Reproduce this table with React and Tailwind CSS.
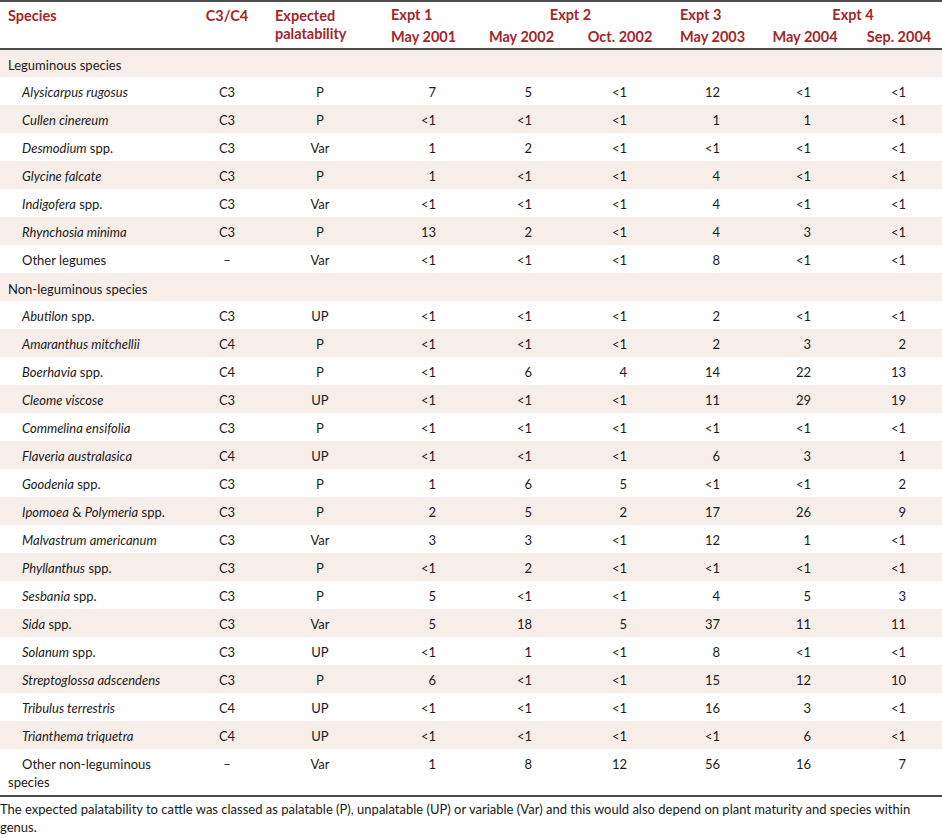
import React from "react";

const rows = [
  { section: "Leguminous species" },
  ["*Alysicarpus rugosus*", "C3", "P", "7", "5", "<1", "12", "<1", "<1"],
  ["*Cullen cinereum*", "C3", "P", "<1", "<1", "<1", "1", "1", "<1"],
  ["*Desmodium* spp.", "C3", "Var", "1", "2", "<1", "<1", "<1", "<1"],
  ["*Glycine falcate*", "C3", "P", "1", "<1", "<1", "4", "<1", "<1"],
  ["*Indigofera* spp.", "C3", "Var", "<1", "<1", "<1", "4", "<1", "<1"],
  ["*Rhynchosia minima*", "C3", "P", "13", "2", "<1", "4", "3", "<1"],
  ["Other legumes", "–", "Var", "<1", "<1", "<1", "8", "<1", "<1"],
  { section: "Non-leguminous species" },
  ["*Abutilon* spp.", "C3", "UP", "<1", "<1", "<1", "2", "<1", "<1"],
  ["*Amaranthus mitchellii*", "C4", "P", "<1", "<1", "<1", "2", "3", "2"],
  ["*Boerhavia* spp.", "C4", "P", "<1", "6", "4", "14", "22", "13"],
  ["*Cleome viscose*", "C3", "UP", "<1", "<1", "<1", "11", "29", "19"],
  ["*Commelina ensifolia*", "C3", "P", "<1", "<1", "<1", "<1", "<1", "<1"],
  ["*Flaveria australasica*", "C4", "UP", "<1", "<1", "<1", "6", "3", "1"],
  ["*Goodenia* spp.", "C3", "P", "1", "6", "5", "<1", "<1", "2"],
  ["*Ipomoea* & *Polymeria* spp.", "C3", "P", "2", "5", "2", "17", "26", "9"],
  ["*Malvastrum americanum*", "C3", "Var", "3", "3", "<1", "12", "1", "<1"],
  ["*Phyllanthus* spp.", "C3", "P", "<1", "2", "<1", "<1", "<1", "<1"],
  ["*Sesbania* spp.", "C3", "P", "5", "<1", "<1", "4", "5", "3"],
  ["*Sida* spp.", "C3", "Var", "5", "18", "5", "37", "11", "11"],
  ["*Solanum* spp.", "C3", "UP", "<1", "1", "<1", "8", "<1", "<1"],
  ["*Streptoglossa adscendens*", "C3", "P", "6", "<1", "<1", "15", "12", "10"],
  ["*Tribulus terrestris*", "C4", "UP", "<1", "<1", "<1", "16", "3", "<1"],
  ["*Trianthema triquetra*", "C4", "UP", "<1", "<1", "<1", "<1", "6", "<1"],
  ["Other non-leguminous|species", "–", "Var", "1", "8", "12", "56", "16", "7"],
];

// right padding for each numeric column so the figures line up like the print
const numPad = ["pr-[36px]", "pr-[39px]", "pr-[42px]", "pr-[34px]", "pr-[45px]", "pr-[36px]"];

// *...* = italic, | = line break
const Name = ({ text }) =>
  text.split("|").map((line, k) => (
    <React.Fragment key={k}>
      {k > 0 && <br />}
      {line.split("*").map((part, i) =>
        i % 2 ? <i key={i}>{part}</i> : <span key={i}>{part}</span>
      )}
    </React.Fragment>
  ));

export default function App() {
  return (
    <div className="w-[942px] bg-white text-[#1a1a1a] text-[13px] font-['Lato',sans-serif]">
      <div className="border-t-2 border-b-2 border-[#4d4d4d]">
        <table className="w-[942px] table-fixed border-collapse">
          <colgroup>
            <col className="w-[196px]" />
            <col className="w-[62px]" />
            <col className="w-[116px]" />
            <col className="w-[98px]" />
            <col className="w-[99px]" />
            <col className="w-[98px]" />
            <col className="w-[85px]" />
            <col className="w-[102px]" />
            <col className="w-[86px]" />
          </colgroup>
          <thead className="text-[#a3262a] font-bold text-[14.5px] leading-[18px]">
            <tr className="h-[24px]">
              <th rowSpan={2} className="align-top pt-[5px] pl-[8px] text-left border-b-2 border-[#4d4d4d]">Species</th>
              <th rowSpan={2} className="align-top pt-[5px] text-center border-b-2 border-[#4d4d4d]">C3/C4</th>
              <th rowSpan={2} className="align-top pt-[5px] pl-[17px] text-left border-b-2 border-[#4d4d4d]">
                Expected
                <br />
                palatability
              </th>
              <th className="pt-[2px] pl-[17px] text-left">Expt 1</th>
              <th colSpan={2} className="pt-[2px] text-center">Expt 2</th>
              <th className="pt-[2px] pl-[11px] text-left">Expt 3</th>
              <th colSpan={2} className="pt-[2px] pl-[10px] text-center">Expt 4</th>
            </tr>
            <tr className="h-[23px]">
              <th className="pl-[17px] text-left border-b-2 border-[#4d4d4d]">May 2001</th>
              <th className="text-center border-b-2 border-[#4d4d4d]">May 2002</th>
              <th className="text-center border-b-2 border-[#4d4d4d]">Oct. 2002</th>
              <th className="pl-[11px] text-left border-b-2 border-[#4d4d4d]">May 2003</th>
              <th className="text-center border-b-2 border-[#4d4d4d]">May 2004</th>
              <th className="text-center border-b-2 border-[#4d4d4d]">Sep. 2004</th>
            </tr>
          </thead>
          <tbody className="leading-[18px]">
            {rows.map((row, idx) => {
              const shade = idx % 2 === 0 ? "bg-[#f7ede9]" : "bg-white";
              if (row.section) {
                return (
                  <tr key={idx} className={`h-[28px] ${shade}`}>
                    <td colSpan={9} className="pl-[8px] pt-[3px]">{row.section}</td>
                  </tr>
                );
              }
              return (
                <tr key={idx} className={`h-[28px] ${shade}`}>
                  <td className="pl-[8px] indent-[14px] pt-[6px] pb-[4px]">
                    <Name text={row[0]} />
                  </td>
                  <td className="align-top text-center pt-[6px]">{row[1]}</td>
                  <td className="align-top text-center pl-[8px] pt-[6px]">{row[2]}</td>
                  {row.slice(3).map((v, j) => (
                    <td key={j} className={`align-top text-right pt-[6px] ${numPad[j]}`}>{v}</td>
                  ))}
                </tr>
              );
            })}
          </tbody>
        </table>
      </div>
      <p className="pt-[3px] leading-[18px]">
        The expected palatability to cattle was classed as palatable (P), unpalatable (UP) or variable (Var) and this would also depend on plant maturity and species within genus.
      </p>
    </div>
  );
}
